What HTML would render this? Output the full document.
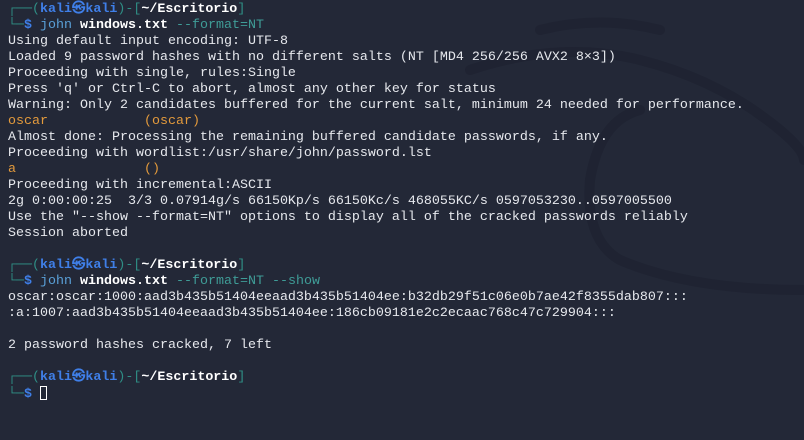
<!DOCTYPE html>
<html><head><meta charset="utf-8">
<style>
html,body{margin:0;padding:0;width:804px;height:440px;overflow:hidden;background:#232837;}
#bg{position:absolute;left:0;top:0}
pre{position:absolute;left:8px;top:2px;margin:0;font-family:"Liberation Mono","DejaVu Sans Mono",monospace;font-size:13.33px;line-height:16px;color:#e6e8ed;white-space:pre}
.g{color:#2f8f86}
.b{color:#3f7fe8;font-weight:bold}
.w{color:#ffffff;font-weight:bold}
.c{color:#5aa0d8}
.t{color:#3f9c97}
.y{color:#e39a3c}
.cur{display:inline-block;width:7px;height:14px;border:1px solid #fff;box-sizing:border-box;vertical-align:-3px}
</style></head><body>
<svg id="bg" width="804" height="440" viewBox="0 0 804 440">
<g fill="none" stroke="#1f2332" stroke-width="10" stroke-linecap="round">
<path d="M470 70 Q560 40 640 60 Q720 80 780 130 Q804 150 804 160"/>
<path d="M640 110 Q600 120 590 180 Q585 240 620 260 Q690 290 804 290"/>
<path d="M540 30 Q600 15 660 30"/>
</g>
</svg>
<pre><span class="g">┌──(</span><span class="b">kali㉿kali</span><span class="g">)-[</span><span class="w">~/Escritorio</span><span class="g">]</span>
<span class="g">└─</span><span class="b">$</span> <span class="c">john</span> <span class="w">windows.txt</span> <span class="t">--format=NT</span>
Using default input encoding: UTF-8
Loaded 9 password hashes with no different salts (NT [MD4 256/256 AVX2 8×3])
Proceeding with single, rules:Single
Press 'q' or Ctrl-C to abort, almost any other key for status
Warning: Only 2 candidates buffered for the current salt, minimum 24 needed for performance.
<span class="y">oscar            (oscar)</span>
Almost done: Processing the remaining buffered candidate passwords, if any.
Proceeding with wordlist:/usr/share/john/password.lst
<span class="y">a                ()</span>
Proceeding with incremental:ASCII
2g 0:00:00:25  3/3 0.07914g/s 66150Kp/s 66150Kc/s 468055KC/s 0597053230..0597005500
Use the "--show --format=NT" options to display all of the cracked passwords reliably
Session aborted

<span class="g">┌──(</span><span class="b">kali㉿kali</span><span class="g">)-[</span><span class="w">~/Escritorio</span><span class="g">]</span>
<span class="g">└─</span><span class="b">$</span> <span class="c">john</span> <span class="w">windows.txt</span> <span class="t">--format=NT --show</span>
oscar:oscar:1000:aad3b435b51404eeaad3b435b51404ee:b32db29f51c06e0b7ae42f8355dab807:::
:a:1007:aad3b435b51404eeaad3b435b51404ee:186cb09181e2c2ecaac768c47c729904:::

2 password hashes cracked, 7 left

<span class="g">┌──(</span><span class="b">kali㉿kali</span><span class="g">)-[</span><span class="w">~/Escritorio</span><span class="g">]</span>
<span class="g">└─</span><span class="b">$</span> <span class="cur"></span></pre>
</body></html>
